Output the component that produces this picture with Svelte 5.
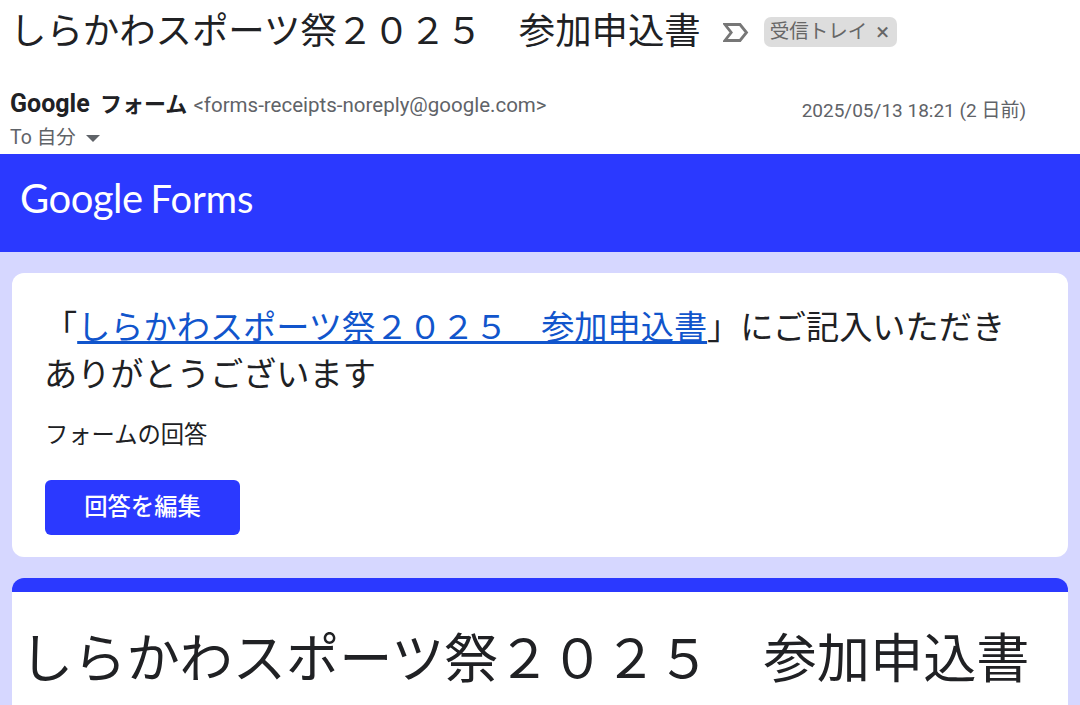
<script>
  const title = 'しらかわスポーツ祭２０２５　参加申込書';
</script>

<div class="page">
  <!-- メールのヘッダー -->
  <header class="mail-head">
    <div class="subject-row">
      <h1>{title}</h1>
      <svg class="label-icon" width="26" height="21" viewBox="0 0 26 21" fill="none" stroke="#777" stroke-width="2.8">
        <path d="M2 2.5h15l6.5 8-6.5 8H2l6.2-8z" />
      </svg>
      <span class="chip">受信トレイ<span class="chip-x">×</span></span>
    </div>
    <div class="from-row">
      <div class="from">
        <strong>Google <span class="kana">フォーム</span></strong>
        <span class="addr">&lt;forms-receipts-noreply@google.com&gt;</span>
      </div>
      <div class="date">2025/05/13 18:21 (2 日前)</div>
    </div>
    <div class="to">To 自分 <span class="caret"></span></div>
  </header>

  <div class="banner"><span class="logo">Google</span><span class="logo-forms">Forms</span></div>

  <main class="body">
    <section class="card">
      <h2>「<a href="#top">{title}</a>」にご記入いただきありがとうございます</h2>
      <p>フォームの回答</p>
      <button class="edit">回答を編集</button>
    </section>

    <section class="form-card">
      <div class="form-title">{title}</div>
    </section>
  </main>
</div>

<style>
  :global(body) {
    margin: 0;
    background: #fff;
  }

  .page {
    width: 1080px;
    height: 705px;
    overflow: hidden;
    font-family: Roboto, "Noto Sans CJK JP", sans-serif;
    color: #202124;
  }

  .mail-head {
    height: 154px;
    padding: 10px 0 0 10px;
    box-sizing: border-box;
  }

  .subject-row {
    display: flex;
    align-items: center;
    height: 44px;
  }

  h1 {
    margin: 0;
    font-size: 36.4px;
    font-weight: 400;
    line-height: 44px;
    white-space: nowrap;
  }

  .label-icon {
    margin-left: 22px;
  }

  .chip {
    margin-left: 15px;
    padding: 0 8px 0 6px;
    height: 30px;
    line-height: 29px;
    background: #ddd;
    border-radius: 7px;
    color: #666;
    font-size: 19.5px;
    white-space: nowrap;
  }

  .chip-x {
    margin-left: 9px;
    font-size: 24px;
    line-height: 29px;
    vertical-align: -2px;
  }

  .from-row {
    display: flex;
    justify-content: space-between;
    padding-right: 54px;
    margin-top: 36px;
  }

  .from {
    font-size: 25px;
    line-height: 28px;
    white-space: nowrap;
  }

  .from strong {
    font-weight: 700;
  }

  .kana {
    margin-left: 4px;
    font-size: 22px;
    font-weight: 700;
  }

  .addr {
    color: #5f6368;
    font-size: 20.5px;
  }

  .date {
    color: #5f6368;
    font-size: 19px;
    line-height: 28px;
    margin-top: 7px;
  }

  .to {
    color: #5f6368;
    font-size: 19.5px;
    line-height: 28px;
    margin-top: -1px;
    display: flex;
    align-items: center;
    gap: 10px;
  }

  .caret {
    width: 0;
    height: 0;
    border-left: 7px solid transparent;
    border-right: 7px solid transparent;
    border-top: 7px solid #5f6368;
  }

  .banner {
    height: 98px;
    box-sizing: border-box;
    background: #2b39ff;
    color: #fff;
    padding: 0 0 10px 20px;
    display: flex;
    align-items: center;
    gap: 8px;
    font-family: Lato, sans-serif;
    font-size: 38px;
  }

  .logo {
    font-size: 40px;
    letter-spacing: -0.5px;
  }

  .body {
    background: #d6d7ff;
    padding: 21px 12px 0;
    height: 453px;
    box-sizing: border-box;
  }

  .card {
    background: #fff;
    border-radius: 12px;
    height: 284px;
    box-sizing: border-box;
    padding: 31px 45px 0 32px;
  }

  h2 {
    margin: 0;
    font-size: 33.2px;
    font-weight: 400;
    line-height: 47px;
  }

  h2 a {
    color: #1155cc;
  }

  .card p {
    margin: 20px 0 0 1px;
    font-size: 23.3px;
    line-height: 34px;
  }

  .edit {
    display: block;
    margin: 28px 0 0 1px;
    padding: 0 0 5px;
    width: 195px;
    height: 55px;
    border: 0;
    border-radius: 6px;
    background: #2b39ff;
    color: #fff;
    font-family: inherit;
    font-size: 23.3px;
    font-weight: 500;
  }

  .form-card {
    margin-top: 21px;
    background: #fff;
    border-top: 14px solid #2b39ff;
    border-radius: 12px 12px 0 0;
    height: 200px;
    padding: 36px 0 0 8px;
  }

  .form-title {
    font-size: 53.2px;
    line-height: 64px;
    white-space: nowrap;
  }
</style>
